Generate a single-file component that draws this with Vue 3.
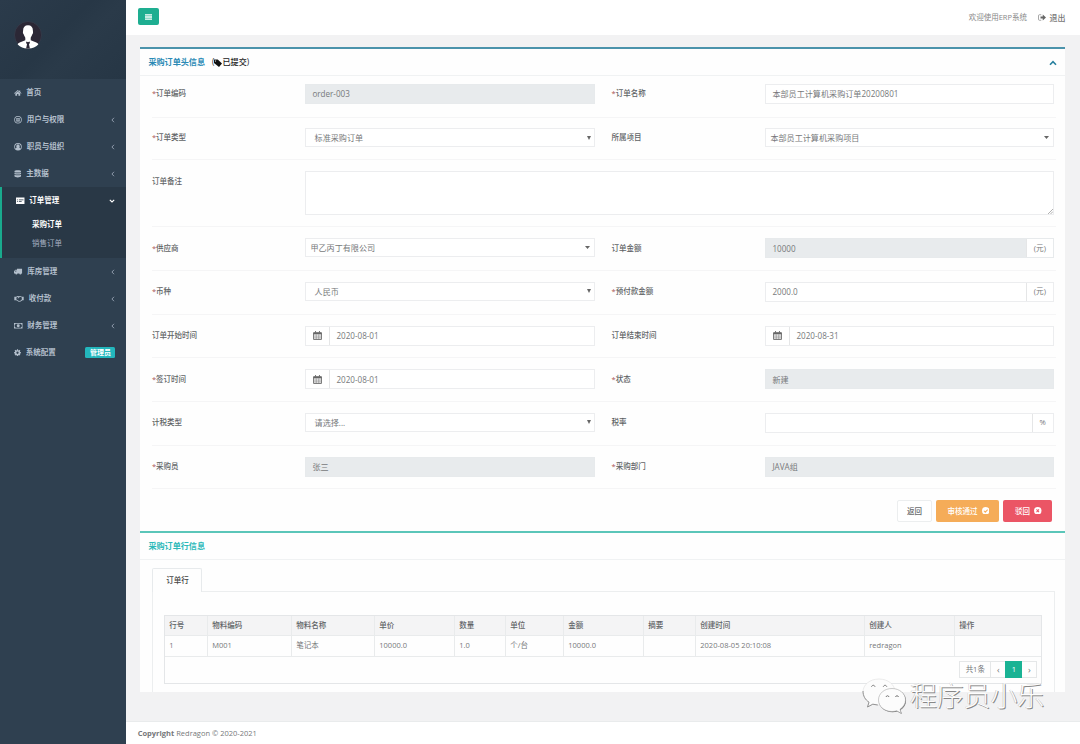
<script setup>
import { ref } from 'vue'

const icons = {
  home: 'M8 2 0 8.8l1 1.2L8 4.2l7 5.8 1-1.2-2.7-2.3V3h-2v1.8zM8 5.4 2.8 9.7V14.5h3.8v-4h2.8v4h3.8V9.7z',
  badge: 'M8 0a8 8 0 1 0 0 16A8 8 0 0 0 8 0zm0 1.6a6.4 6.4 0 1 1 0 12.8A6.4 6.4 0 0 1 8 1.6zM4 4h8v2H4zm0 3h3.4v5H4.8zm4.6 0H12l-.8 5H8.600z',
  user: 'M8 0a8 8 0 1 0 0 16A8 8 0 0 0 8 0zm0 1.500a6.500 6.500 0 0 1 5 10.600c-.5-1.800-1.500-2.600-2.400-2.700a3.700 3.700 0 1 0-5.200 0C4.500 9.500 3.500 10.300 3 12.100A6.500 6.500 0 0 1 8 1.500z',
  database: 'M1 2.500C1 1 4 .3 8 .3s7 .7 7 2.200v1C15 5 12 5.500 8 5.500S1 5 1 3.500zM1 6c3 1.500 11 1.500 14 0v2.500c-3 1.700-11 1.700-14 0zm0 4c3 1.500 11 1.500 14 0v3.500c-1 3-13 3-14 0z',
  list: 'M0 1h18v14H0zm2 4.500V7h2V5.500zm4 0V7h10V5.500zM2 9v1.500h2V9zm4 0v1.500h6V9z',
  truck: 'M7 1h12v11h-1.500a2.500 2.500 0 0 1-5 0H8a2.500 2.500 0 0 1-5 0H0V7l3-3.500h4zM4 5 1.800 7.500H5.500V5z',
  handshake: 'M0 3.500h4l3-1.500 3 .5 3-.5 3 1.500h4v7.500h-2.500l-4 3-4 .5L6 12l-2-1H0zm4.500 1.800v4.200l2 1 3.500 2.500 3-.5 3-3V5.500l-3-1.800-3 1.500-2 2-1-.5 1.500-2.500-1.500-.2z',
  money: 'M0 1.500h20v13H0zM3.500 3.500A2 2 0 0 1 1.500 5.500v5a2 2 0 0 1 2 2h13a2 2 0 0 1 2-2v-5a2 2 0 0 1-2-2zM10 4.500a3.500 3.500 0 1 1 0 7 3.500 3.500 0 0 1 0-7z',
  cog: 'M6.800 0h2.400l.4 2 1.500.6 1.700-1.200 1.700 1.700-1.100 1.700.6 1.600 2 .4v2.400l-2 .4-.6 1.500 1.100 1.700-1.700 1.700-1.700-1.100-1.500.6-.4 2H6.800l-.4-2-1.600-.6-1.700 1.100-1.700-1.700 1.200-1.700-.6-1.500-2-.4V6.800l2-.4.6-1.600-1.200-1.700 1.700-1.700 1.700 1.200 1.600-.6zM8 5.400a2.600 2.600 0 1 0 0 5.200 2.600 2.600 0 0 0 0-5.200z'
}

const menuTop = [
  { icon: 'home', w: 7.5, text: '首页' },
  { icon: 'badge', w: 8, text: '用户与权限', arrow: true },
  { icon: 'user', w: 8, text: '职员与组织', arrow: true },
  { icon: 'database', w: 7.5, text: '主数据', arrow: true }
]

const menuBottom = [
  { icon: 'truck', w: 8.5, text: '库房管理', arrow: true },
  { icon: 'handshake', w: 10, text: '收付款', arrow: true },
  { icon: 'money', w: 8.5, text: '财务管理', arrow: true },
  { icon: 'cog', w: 7, text: '系统配置', tag: '管理员' }
]

const rows = [
  { size: 'first', fields: [
    { label: '订单编码', req: true, type: 'input', value: 'order-003', disabled: true },
    { label: '订单名称', req: true, type: 'input', value: '本部员工计算机采购订单20200801' }
  ] },
  { size: 'short', fields: [
    { label: '订单类型', req: true, type: 'select', value: '标准采购订单' },
    { label: '所属项目', type: 'select2', value: '本部员工计算机采购项目' }
  ] },
  { size: 'tall', fields: [{ label: '订单备注', type: 'textarea' }] },
  { fields: [
    { label: '供应商', req: true, type: 'select2', value: '甲乙丙丁有限公司' },
    { label: '订单金额', type: 'input', value: '10000', disabled: true, unit: '(元)' }
  ] },
  { fields: [
    { label: '币种', req: true, type: 'select', value: '人民币' },
    { label: '预付款金额', req: true, type: 'input', value: '2000.0', unit: '(元)' }
  ] },
  { fields: [
    { label: '订单开始时间', type: 'date', value: '2020-08-01' },
    { label: '订单结束时间', type: 'date', value: '2020-08-31' }
  ] },
  { fields: [
    { label: '签订时间', req: true, type: 'date', value: '2020-08-01' },
    { label: '状态', req: true, type: 'input', value: '新建', disabled: true }
  ] },
  { fields: [
    { label: '计税类型', type: 'select', value: '请选择...' },
    { label: '税率', type: 'input', value: '', unit: '%' }
  ] },
  { fields: [
    { label: '采购员', req: true, type: 'input', value: '张三', disabled: true },
    { label: '采购部门', req: true, type: 'input', value: 'JAVA组', disabled: true }
  ] }
]

const columns = ['行号', '物料编码', '物料名称', '单价', '数量', '单位', '金额', '摘要', '创建时间', '创建人', '操作']
const lines = ref([
  ['1', 'M001', '笔记本', '10000.0', '1.0', '个/台', '10000.0', '', '2020-08-05 20:10:08', 'redragon', '']
])
</script>

<template>
  <div class="wrapper">
    <nav class="sidebar">
      <div class="profile">
        <svg class="avatar" viewBox="0 0 28 28">
          <circle cx="14" cy="14" r="13.500" fill="#2b2735" stroke="#3a4250" stroke-width=".6" />
          <path d="M14 4.300c3.200 0 4.900 2 4.900 5.200 0 1 .3 1.400.1 2.400-.2.800-.6 1-.8 1.700-.4 1.500-1.100 2.300-1.500 3.100v2.600l5.600 2.300c1.100.5 1.700 1 2 1.800A13.500 13.500 0 0 1 14 27.500 13.500 13.500 0 0 1 3.700 23.400c.3-.8.900-1.300 2-1.800l5.600-2.300v-2.600c-.4-.8-1.100-1.600-1.500-3.100-.2-.7-.6-.9-.8-1.700-.2-1 .1-1.400.1-2.400 0-3.200 1.700-5.200 4.900-5.200z" fill="#fff" />
          <path d="m12.600 20.500 1.400.8 1.400-.8.6 1.200-1 1.500.9 4.300h-3.800l.9-4.300-1-1.500z" fill="#2b2735" />
        </svg>
      </div>
      <ul class="menu">
        <li v-for="item in menuTop" :key="item.text" class="menu-item">
          <svg class="menu-icon" :style="{ width: item.w + 'px' }" viewBox="0 0 16 16">
            <path :d="icons[item.icon]" fill-rule="evenodd" />
          </svg>
          <span>{{ item.text }}</span>
          <svg v-if="item.arrow" class="arrow" viewBox="0 0 4 6"><path d="M3 .8.900 3 3 5.200" /></svg>
        </li>
        <li class="menu-group">
          <div class="menu-item active">
            <svg class="menu-icon" viewBox="0 0 18 16">
              <path :d="icons.list" fill-rule="evenodd" />
            </svg>
            <span>订单管理</span>
            <svg class="arrow down" viewBox="0 0 6 4"><path d="M.8.900 3 3 5.200.900" /></svg>
          </div>
          <div class="sub-item current">采购订单</div>
          <div class="sub-item">销售订单</div>
        </li>
        <li v-for="item in menuBottom" :key="item.text" class="menu-item">
          <svg class="menu-icon" :style="{ width: item.w + 'px' }" :viewBox="item.icon === 'cog' ? '0 0 16 16' : '0 0 20 16'">
            <path :d="icons[item.icon]" fill-rule="evenodd" />
          </svg>
          <span>{{ item.text }}</span>
          <svg v-if="item.arrow" class="arrow" viewBox="0 0 4 6"><path d="M3 .8.900 3 3 5.200" /></svg>
          <em v-if="item.tag" class="tag">{{ item.tag }}</em>
        </li>
      </ul>
    </nav>

    <div class="page">
      <header class="topbar">
        <button class="toggle">
          <svg viewBox="0 0 7 6"><path d="M0 .8h7M0 3h7M0 5.200h7" stroke="#fff" stroke-width="1.300" /></svg>
        </button>
        <div class="top-links">
          <span class="welcome">欢迎使用ERP系统</span>
          <svg class="signout" viewBox="0 0 16 14">
            <path d="M6.500 1.500H2.800A1.800 1.800 0 0 0 1 3.300v7.400a1.800 1.800 0 0 0 1.800 1.800h3.700" fill="none" stroke="#8a8a8a" stroke-width="1.500" />
            <path d="M5 4.800h4.500V1.200L16 7l-6.500 5.800V9.200H5z" fill="#666" />
          </svg>
          <span class="logout">退出</span>
        </div>
      </header>

      <main class="content">
        <section class="ibox">
          <div class="ibox-title">
            <h5>采购订单头信息</h5>
            <span class="status">(<svg viewBox="0 0 16 16"><path d="M0 1h7.500L16 9l-6 7L0 8zM3 2.800a1.200 1.200 0 1 0 .1 0z" fill-rule="evenodd" /></svg>已提交)</span>
            <svg class="collapse" viewBox="0 0 8 6"><path d="m1 4.700 3-3 3 3" /></svg>
          </div>
          <div class="form">
            <div v-for="(row, i) in rows" :key="i" class="form-row" :class="row.size">
              <template v-for="field in row.fields" :key="field.label">
                <label class="label"><i v-if="field.req">*</i>{{ field.label }}</label>
                <div v-if="field.type === 'textarea'" class="control textarea">
                  <svg viewBox="0 0 6 6"><path d="M0 6 6 0M3 6l3-3" /></svg>
                </div>
                <div v-else class="control" :class="[field.type, { disabled: field.disabled }]">
                  <span v-if="field.type === 'date'" class="addon cal">
                    <svg viewBox="0 0 16 16">
                      <path d="M1 3h14v12H1zM4.500 0v3M11.500 0v3" fill="none" stroke="#666" stroke-width="1.600" />
                      <path d="M1 3h14v3H1z" fill="#666" />
                      <path d="M5.700 6v9M10.300 6v9M1 9h14M1 12.200h14" stroke="#777" />
                    </svg>
                  </span>
                  <span class="value">{{ field.value }}</span>
                  <span v-if="field.unit" class="addon unit">{{ field.unit }}</span>
                  <svg v-if="field.type === 'select'" class="caret" viewBox="0 0 4 4"><path d="M0 0h4L2 4z" /></svg>
                  <svg v-if="field.type === 'select2'" class="caret wide" viewBox="0 0 5 3"><path d="M0 0h5L2.500 3z" /></svg>
                </div>
              </template>
            </div>
          </div>
          <div class="actions">
            <button class="btn back">返回</button>
            <button class="btn pass">审核通过
              <svg viewBox="0 0 16 16"><circle cx="8" cy="8" r="8" fill="#fff" /><path d="m4 8 3 3 5-5.500" fill="none" stroke="#f8ac59" stroke-width="2.200" /></svg>
            </button>
            <button class="btn reject">驳回
              <svg viewBox="0 0 16 16"><circle cx="8" cy="8" r="8" fill="#fff" /><path d="m5.300 5.300 5.400 5.400M10.700 5.300l-5.400 5.400" stroke="#ed5565" stroke-width="2.200" /></svg>
            </button>
          </div>
        </section>

        <section class="ibox lines">
          <div class="ibox-title">
            <h5>采购订单行信息</h5>
          </div>
          <div class="tabs"><span class="tab">订单行</span></div>
          <div class="tab-body">
            <div class="table">
              <div class="tr head">
                <span v-for="c in columns" :key="c">{{ c }}</span>
              </div>
              <div v-for="(line, i) in lines" :key="i" class="tr">
                <span v-for="(cell, j) in line" :key="j">{{ cell }}</span>
              </div>
              <div class="table-foot">
                <div class="pager">
                  <span class="total">共1条</span>
                  <span class="nav">‹</span>
                  <span class="now">1</span>
                  <span class="nav">›</span>
                </div>
              </div>
            </div>
          </div>
        </section>
      </main>

      <footer class="footer"><b>Copyright</b>&nbsp;Redragon © 2020-2021</footer>
    </div>

    <div class="watermark">
      <svg viewBox="0 0 46 38">
        <path d="M18 2C9 2 2 7.500 2 15c0 4.500 2.300 7.800 6 10.200L6.500 30l5.300-2.800c2 .6 4 .8 6.200.8 9 0 16-5.500 16-13S27 2 18 2z" fill="#fcfcfc" stroke="#d8d8d8" stroke-width=".5" />
        <path d="M2 14c0 5 2.300 8.800 6 11.200L6.500 30l5.300-2.800 5 .8" fill="none" stroke="#888" stroke-width=".9" />
        <path d="M31 11.500c-7.700 0-13.500 5-13.500 11.500S23.300 34.500 31 34.500c1.600 0 3.200-.3 4.700-.7l4.500 2.500-1.200-4c3.300-2.300 5.500-5.500 5.500-9.300 0-6.500-6-11.500-13.500-11.500z" fill="#777" transform="translate(.6 .8)" />
        <path d="M31 11.500c-7.700 0-13.500 5-13.500 11.500S23.300 34.500 31 34.500c1.600 0 3.200-.3 4.700-.7l4.500 2.500-1.200-4c3.300-2.300 5.500-5.500 5.500-9.300 0-6.500-6-11.500-13.500-11.500z" fill="#fcfcfc" stroke="#999" stroke-width=".5" />
        <path d="M10.500 9.800c.5-2 3-2 3.500 0M22.300 9.800c.5-2 3-2 3.500 0M25 20c.4-1.700 2.600-1.700 3 0M34.500 20c.4-1.700 2.600-1.700 3 0" fill="none" stroke="#777" />
      </svg>
      <span>程序员小乐</span>
    </div>
  </div>
</template>

<style>
body {
  margin: 0;
  overflow: hidden;
}
</style>

<style scoped>
.wrapper {
  position: relative;
  display: flex;
  width: 1080px;
  height: 744px;
  overflow: hidden;
  background: #2f4050;
  font-family: 'Open Sans', 'Noto Sans CJK SC', sans-serif;
  font-size: 7.5px;
  line-height: 1;
  color: #76787a;
}

.wrapper * {
  box-sizing: border-box;
}

svg {
  display: block;
  flex: none;
}

/* sidebar */
.sidebar {
  width: 126.4px;
  flex: none;
  background: #2f4050;
}

.profile {
  height: 79px;
  padding: 21px 0 0 14px;
  background: linear-gradient(135deg, #2b3b4b 0%, #273746 45%, #2a3a49 60%, #263645 100%);
}

.avatar {
  width: 28px;
  height: 28px;
}

.menu {
  list-style: none;
  margin: 0;
  padding: 0;
}

.menu-item {
  display: flex;
  align-items: center;
  height: 27px;
  padding: 1px 11px 0 14px;
  color: #b3bfcc;
  font-weight: 600;
}

.menu-icon {
  width: 8.5px;
  height: 7.5px;
  margin-right: 4.8px;
  fill: #b3bfcc;
}

.arrow {
  width: 4px;
  height: 6px;
  margin-left: auto;
  fill: none;
  stroke: #a7b1c2;
  stroke-width: .8;
}

.arrow.down {
  width: 6px;
  height: 4px;
  stroke: #fff;
  stroke-width: 1.1;
}

.menu-group {
  height: 70.5px;
  border-left: 2px solid #19aa8d;
  background: #293846;
}

.menu-item.active {
  color: #fff;
  font-weight: 700;
}

.active .menu-icon {
  fill: #fff;
}

.sub-item {
  height: 19px;
  padding-left: 30px;
  line-height: 20px;
  color: #a7b1c2;
}

.sub-item.current {
  color: #fff;
  font-weight: 700;
}

.tag {
  width: 30px;
  height: 11px;
  margin-left: auto;
  border-radius: 1.5px;
  background: #23b7bd;
  color: #fff;
  font-style: normal;
  font-weight: 700;
  font-size: 7px;
  line-height: 11px;
  text-align: center;
}

/* page */
.page {
  flex: 1;
  display: flex;
  flex-direction: column;
  background: #f2f2f3;
}

.topbar {
  display: flex;
  justify-content: space-between;
  height: 35px;
  padding: 8px 14.5px 0 11.5px;
  background: #fff;
}

.toggle {
  display: flex;
  align-items: center;
  justify-content: center;
  width: 21.5px;
  height: 17px;
  padding: 0;
  border: 0;
  border-radius: 2px;
  background: #1eae91;
}

.toggle svg {
  width: 7px;
  height: 6px;
}

.top-links {
  display: flex;
  align-items: center;
  height: 19px;
}

.welcome {
  color: #888;
}

.signout {
  width: 8px;
  height: 7px;
  margin: 0 3.5px 0 11px;
}

.logout {
  font-size: 8px;
  font-weight: 500;
  color: #777;
}

.content {
  padding: 12px 15px 0 14px;
}

.ibox {
  height: 484px;
  border-top: 2px solid #4b93ab;
  background: #fefefe;
}

.ibox-title {
  display: flex;
  align-items: center;
  height: 27px;
  padding: 1px 8px 0;
  border-bottom: 1px solid #f0f2f3;
}

.ibox-title h5 {
  margin: 0;
  font-size: 8.1px;
  font-weight: 700;
  color: #2a8ab5;
}

.status {
  display: flex;
  align-items: center;
  margin-left: 7px;
  font-size: 8.1px;
  font-weight: 500;
  color: #222;
}

.status svg {
  width: 8px;
  height: 8px;
  fill: #111;
}

.collapse {
  width: 8px;
  height: 6px;
  margin-left: auto;
  fill: none;
  stroke: #27809f;
  stroke-width: 1.6;
}

.form {
  padding: 0 9px 0 11.5px;
}

.form-row {
  display: grid;
  grid-template-columns: 153px 290px 170px 289px;
  align-items: start;
  height: 43.65px;
  padding-top: 11px;
  border-bottom: 1px solid #f5f5f6;
}

.form-row.first {
  height: 42px;
  padding-top: 8px;
}

.form-row.short {
  height: 42.3px;
  padding-top: 10px;
}

.form-row.tall {
  height: 67px;
}

.label {
  padding-top: 6.4px;
  font-weight: 500;
  color: #606365;
}

.label i {
  font-style: normal;
  color: #a55;
}

.control + .label {
  padding-left: 16.7px;
}

.control {
  display: flex;
  align-items: center;
  height: 20px;
  border: 1px solid #ecedef;
  background: #fff;
  font-size: 8.1px;
  color: #77797b;
}

.control.select,
.control.select2 {
  height: 19px;
}

.value {
  flex: 1;
  padding: 1px 0 0 6.5px;
}

.select .value {
  padding-left: 8.7px;
}

.select2 .value {
  padding-left: 4.5px;
}

.disabled {
  border-color: #e7eaec;
  background: #e8ebed;
}

.caret {
  width: 4px;
  height: 4px;
  margin-right: 3px;
  fill: #666;
}

.caret.wide {
  width: 5px;
  height: 3px;
  margin-right: 3.5px;
}

.addon {
  display: flex;
  align-items: center;
  justify-content: center;
  height: 18px;
  background: #fff;
}

.cal {
  width: 24px;
  border-right: 1px solid #e5e6e7;
}

.cal svg {
  width: 9px;
  height: 9px;
}

.unit {
  padding: 0 7px;
  border-left: 1px solid #e5e6e7;
  font-size: 7.6px;
}

.textarea {
  grid-column: 2 / 5;
  height: 44px;
  align-items: flex-end;
  justify-content: flex-end;
}

.textarea svg {
  width: 5px;
  height: 5px;
  stroke: #888;
  stroke-width: .8;
}

.actions {
  display: flex;
  justify-content: flex-end;
  gap: 4px;
  padding: 11px 13.2px 0 0;
}

.btn {
  display: flex;
  align-items: center;
  justify-content: center;
  gap: 4px;
  height: 22px;
  padding: 0 0 1px;
  border: 0;
  border-radius: 2px;
  color: #fff;
  font-family: inherit;
  font-size: 7.5px;
  font-weight: 500;
}

.btn svg {
  width: 7.5px;
  height: 7.5px;
}

.back {
  width: 34.5px;
  border: 1px solid #eceeef;
  background: #fff;
  color: #676a6c;
}

.pass {
  width: 63px;
  padding-left: 2px;
  background: #f5ac58;
}

.reject {
  width: 49px;
  padding-left: 2px;
  background: #eb5565;
}

/* order lines */
.ibox.lines {
  height: 161px;
  border-top-color: #5bc6b9;
}

.lines .ibox-title h5 {
  color: #2bb9b9;
}

.tabs {
  display: flex;
  height: 23px;
  margin: 8px 10px 0 11.5px;
}

.tab {
  position: relative;
  width: 50px;
  height: 24px;
  border: 1px solid #e7eaec;
  border-bottom: 0;
  border-radius: 2px 2px 0 0;
  background: #fefefe;
  line-height: 22px;
  text-align: center;
  text-indent: 1px;
  font-weight: 500;
  color: #444;
}

.tab-body {
  height: 101px;
  margin: 0 10px 0 11.5px;
  padding: 23px 11.4px 0;
  border: 1px solid #eceeef;
  border-bottom: 0;
}

.table {
  width: 878px;
  border: 1px solid #e4e6e8;
}

.tr {
  display: grid;
  grid-template-columns: 43px 84px 83px 80px 51px 58px 80px 52px 169px 90px 1fr;
  height: 21px;
  border-bottom: 1px solid #e9ebec;
}

.tr span {
  padding-left: 4px;
  border-right: 1px solid #e9ebec;
  line-height: 19px;
  white-space: nowrap;
}

.tr span:last-child {
  border-right: 0;
}

.tr.head {
  height: 20px;
  background: #f4f4f5;
  font-weight: 500;
  color: #606365;
}

.table-foot {
  display: flex;
  justify-content: flex-end;
  height: 26px;
  padding: 4px 4px 0 0;
}

.pager {
  display: flex;
  height: 17px;
  border: 1px solid #e5e7e8;
  line-height: 15px;
  text-align: center;
}

.total {
  width: 31px;
  border-right: 1px solid #e5e7e8;
}

.nav {
  width: 14px;
  font-size: 9px;
}

.now {
  width: 17px;
  margin: -1px 0;
  padding-top: 1px;
  background: #1ab394;
  color: #fff;
}

.footer {
  height: 23px;
  margin-top: auto;
  padding-left: 11.3px;
  border-top: 1px solid #e9ebec;
  background: #fff;
  line-height: 22px;
}

/* floats over the page corner */
.watermark {
  position: absolute;
  left: 861px;
  top: 677px;
  display: flex;
  align-items: center;
  gap: 3px;
  color: #fdfdfd;
  font-size: 26.8px;
  font-weight: 300;
  text-shadow: 1px 1px 0 #888, -.4px -.4px 0 #bbb;
  white-space: nowrap;
}

.watermark svg {
  width: 46px;
  height: 38px;
}
</style>
